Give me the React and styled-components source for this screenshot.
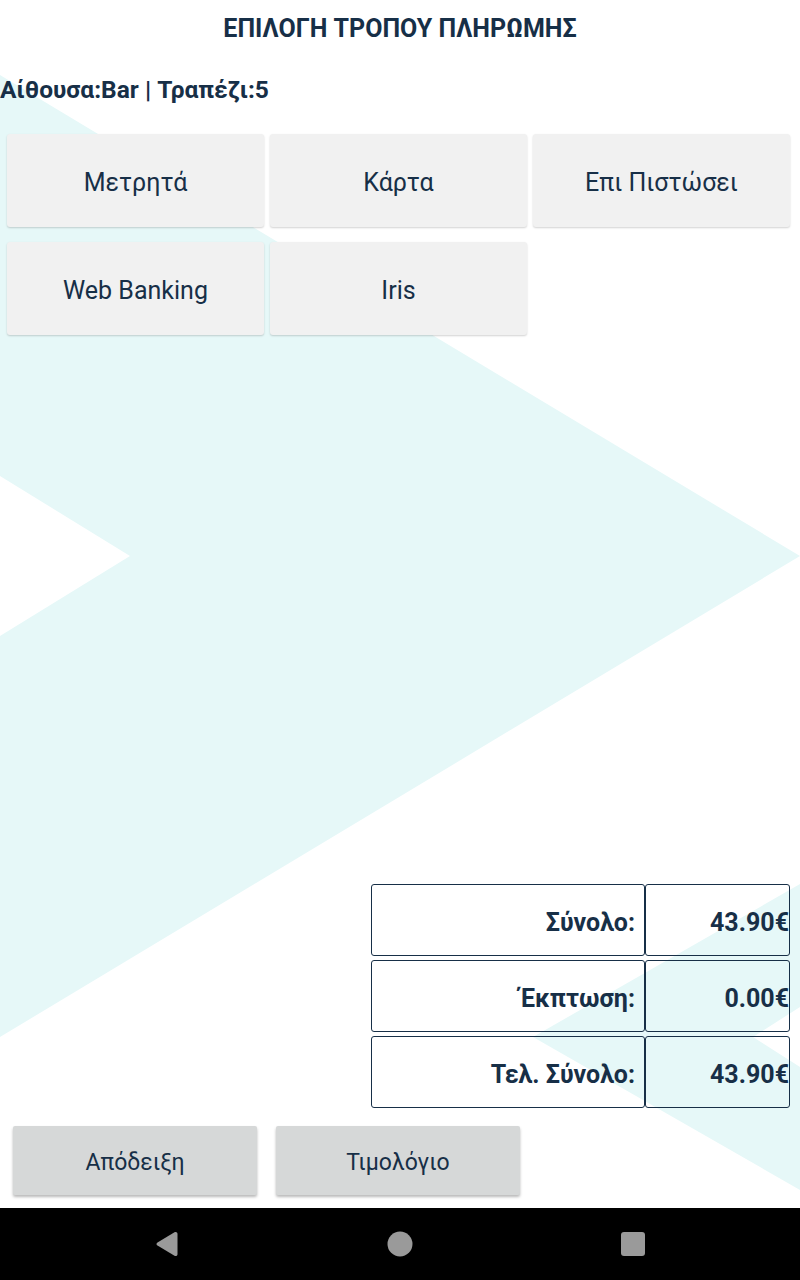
import React from "react";
import styled, { createGlobalStyle } from "styled-components";

const GlobalStyle = createGlobalStyle`
  html, body { margin: 0; padding: 0; background: #ffffff; }
  * { box-sizing: border-box; }
`;

const NAVY = "#172f47";

const Page = styled.div`
  position: relative;
  width: 800px;
  height: 1280px;
  overflow: hidden;
  display: flex;
  flex-direction: column;
  font-family: Roboto, "Noto Sans", sans-serif;
  color: ${NAVY};
  background: #ffffff;
`;

const Backdrop = styled.svg`
  position: absolute;
  left: 0;
  top: 0;
  width: 800px;
  height: 1280px;
  z-index: 0;
`;

const Content = styled.main`
  position: relative;
  z-index: 1;
  flex: 1;
  display: flex;
  flex-direction: column;
`;

const Title = styled.h1`
  margin: 0;
  padding-top: 16px;
  font-size: 25px;
  line-height: 26px;
  font-weight: 700;
  text-align: center;
`;

const Subtitle = styled.h2`
  margin: 35px 0 0 0;
  font-size: 24.5px;
  line-height: 26px;
  font-weight: 700;
`;

const MethodsGrid = styled.div`
  margin-top: 31px;
  padding: 0 7px;
  display: grid;
  grid-template-columns: repeat(3, 257px);
  column-gap: 6px;
  row-gap: 15px;
`;

const MethodButton = styled.button`
  height: 93px;
  border: none;
  border-radius: 3px;
  background: #f1f1f1;
  box-shadow: 0 1px 2px rgba(0, 0, 0, 0.18);
  font-family: Roboto, "Noto Sans", sans-serif;
  font-size: 25px;
  color: ${NAVY};
  display: flex;
  align-items: center;
  justify-content: center;
  padding: 3px 0 0 0;
`;

const Totals = styled.div`
  margin-top: auto;
  align-self: flex-end;
  margin-right: 10px;
  width: 419px;
  display: flex;
  flex-direction: column;
  gap: 4px;
`;

const TotalRow = styled.div`
  display: grid;
  grid-template-columns: 274px 145px;
  height: 72px;
`;

const Cell = styled.div`
  border: 1px solid ${NAVY};
  border-radius: 3px;
  display: flex;
  align-items: center;
  justify-content: flex-end;
  padding: 4px ${(p) => (p.$value ? "0" : "9px")} 0 0;
  font-size: 25px;
  font-weight: 700;
  white-space: nowrap;
`;

const Actions = styled.div`
  margin: 18px 0 13px 13px;
  display: flex;
  gap: 19px;
`;

const ActionButton = styled.button`
  width: 244px;
  height: 69px;
  border: none;
  border-radius: 2px;
  background: #d6d8d8;
  box-shadow: 0 2px 3px rgba(0, 0, 0, 0.28);
  font-family: Roboto, "Noto Sans", sans-serif;
  font-size: 23px;
  color: ${NAVY};
  padding: 3px 0 0 0;
`;

const NavBar = styled.nav`
  position: relative;
  z-index: 1;
  height: 72px;
  background: #000000;
  display: grid;
  grid-template-columns: repeat(3, 233px);
  align-items: center;
  padding: 0 0 0 50px;
`;

const NavSlot = styled.div`
  display: flex;
  justify-content: center;
  align-items: center;
`;

const methods = ["Μετρητά", "Κάρτα", "Επι Πιστώσει", "Web Banking", "Iris"];

const totals = [
  ["Σύνολο:", "43.90€"],
  ["Έκπτωση:", "0.00€"],
  ["Τελ. Σύνολο:", "43.90€"],
];

export default function App() {
  return (
    <Page>
      <GlobalStyle />
      <Backdrop viewBox="0 0 800 1280" aria-hidden="true">
        <polygon
          points="0,75 800,556 0,1037 0,636 130,556 0,476"
          fill="#e6f8f8"
        />
        <polygon
          points="800,884 533,1037 800,1190 800,1067 753,1037 800,1007"
          fill="#e6f8f8"
        />
      </Backdrop>
      <Content>
        <Title>ΕΠΙΛΟΓΗ ΤΡΟΠΟΥ ΠΛΗΡΩΜΗΣ</Title>
        <Subtitle>Αίθουσα:Bar | Τραπέζι:5</Subtitle>
        <MethodsGrid>
          {methods.map((m) => (
            <MethodButton key={m}>{m}</MethodButton>
          ))}
        </MethodsGrid>
        <Totals>
          {totals.map(([label, value]) => (
            <TotalRow key={label}>
              <Cell>{label}</Cell>
              <Cell $value>{value}</Cell>
            </TotalRow>
          ))}
        </Totals>
        <Actions>
          <ActionButton>Απόδειξη</ActionButton>
          <ActionButton>Τιμολόγιο</ActionButton>
        </Actions>
      </Content>
      <NavBar>
        <NavSlot>
          <svg width="24" height="26" viewBox="0 0 24 26">
            <path
              d="M19.5 1.2 C21 0.4 22.5 1.2 22.5 3 L22.5 23 C22.5 24.8 21 25.6 19.5 24.8 L2.5 14.6 C1.2 13.8 1.2 12.2 2.5 11.4 Z"
              fill="#9a9a9a"
            />
          </svg>
        </NavSlot>
        <NavSlot>
          <svg width="26" height="26" viewBox="0 0 26 26">
            <circle cx="13" cy="13" r="12.5" fill="#9a9a9a" />
          </svg>
        </NavSlot>
        <NavSlot>
          <svg width="24" height="24" viewBox="0 0 24 24">
            <rect x="0" y="0" width="24" height="24" rx="3" fill="#9a9a9a" />
          </svg>
        </NavSlot>
      </NavBar>
    </Page>
  );
}
